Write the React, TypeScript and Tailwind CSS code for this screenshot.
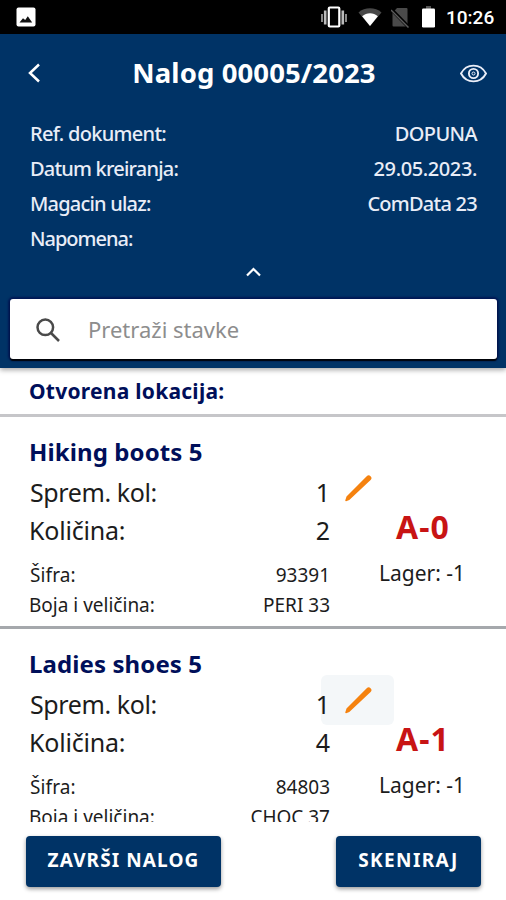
type OrderItem = {
  name: string;
  prepared: number;
  quantity: number;
  code: string;
  variant: string;
  location: string;
  stock: number;
  active?: boolean;
};

const details = [
  { label: 'Ref. dokument:', value: 'DOPUNA', labelClass: 'tracking-[-0.7px]', valueClass: 'tracking-[-0.6px]' },
  { label: 'Datum kreiranja:', value: '29.05.2023.', labelClass: 'tracking-[-0.8px]', valueClass: 'tracking-[-0.4px]' },
  { label: 'Magacin ulaz:', value: 'ComData 23', labelClass: 'tracking-[-0.8px]', valueClass: 'tracking-[-0.75px]' },
  { label: 'Napomena:', value: '', labelClass: 'tracking-[-1px]', valueClass: '' },
];

const items: OrderItem[] = [
  {
    name: 'Hiking boots 5',
    prepared: 1,
    quantity: 2,
    code: '93391',
    variant: 'PERI 33',
    location: 'A-0',
    stock: -1,
  },
  {
    name: 'Ladies shoes 5',
    prepared: 1,
    quantity: 4,
    code: '84803',
    variant: 'CHOC 37',
    location: 'A-1',
    stock: -1,
    active: true,
  },
];

const StatusBar = () => (
  <div className="flex h-[34px] shrink-0 items-center bg-black pr-[11px] pl-[16px]">
    <svg className="h-[20px] w-[20px]" viewBox="0 0 20 20">
      <rect x="0.5" y="0.5" width="19" height="19" rx="2" fill="#fff" />
      <path d="M3.5 15.5 7 11.3l2.2 1.6 2.6-3.7 4.4 6.3z" fill="#111" />
    </svg>
    <svg className="ml-auto h-[22px] w-[26px]" viewBox="0 0 26 22">
      <path d="M1 8v8M25 8v8" stroke="#888" strokeWidth="2" />
      <path d="M4.2 4.5v14M21.8 4.5v14" stroke="#bbb" strokeWidth="2.6" />
      <rect x="7.8" y="1.5" width="10.5" height="19" rx="1" fill="#000" stroke="#fff" strokeWidth="2.2" />
    </svg>
    <svg className="ml-[11px] h-[20px] w-[24px]" viewBox="0 0 25 20">
      <path d="M0.5 5.2C7 -.4 18 -.4 24.5 5.2L12.5 19.5z" fill="#484848" />
      <path d="M4.3 9.2C9 5 16 5 20.7 9.2L12.5 19.5z" fill="#fff" />
    </svg>
    <svg className="ml-[9px] h-[21px] w-[18px]" viewBox="0 0 18 21">
      <path d="M6 1h9.5q1 0 1 1v17.5H2.5q-1 0-1-1V6z" fill="#4a4a4a" />
      <path d="M-.5 1.5 18 20.5" stroke="#000" strokeWidth="3.5" />
      <path d="M0 3 17.5 20.5" stroke="#5c5c5c" strokeWidth="1.5" />
    </svg>
    <svg className="ml-[13px] h-[22px] w-[13px]" viewBox="0 0 13 22">
      <rect x="4" y="0" width="5" height="3" fill="#555" />
      <rect x="0" y="2.5" width="13" height="19" rx="1.2" fill="#fff" />
    </svg>
    <span className="ml-[11px] w-[49px] pt-[2px] font-['Roboto'] text-[19px] font-medium whitespace-nowrap text-white">
      10:26
    </span>
  </div>
);

const Header = () => (
  <header className="relative z-10 h-[334px] shrink-0 bg-[#003366] text-white shadow-[0_2px_5px_rgba(0,0,0,0.35)]">
    <div className="flex h-[82px] items-center justify-between pr-[19px] pl-[28px]">
      <button aria-label="Nazad" className="-mt-[4px]">
        <svg className="h-[20px] w-[13px]" viewBox="0 0 13 20" fill="none" stroke="#fff" strokeWidth="2.5">
          <path d="M11 1.5 2 10l9 8.5" />
        </svg>
      </button>
      <h1 className="-mt-[4px] ml-[7px] text-[27.5px] font-bold tracking-[0.1px] whitespace-nowrap">
        Nalog 00005/2023
      </h1>
      <button aria-label="Prikaz" className="-mt-[4px]">
        <svg className="h-[19px] w-[27px]" viewBox="0 0 27 19" fill="none" stroke="#eaeef8" strokeWidth="1.9">
          <path d="M1 9.5C6.5-1 20.5-1 26 9.5 20.5 20 6.5 20 1 9.5z" />
          <circle cx="13.5" cy="9.5" r="4.6" />
          <circle cx="13.5" cy="9.5" r="1.5" strokeWidth="1" />
        </svg>
      </button>
    </div>
    <dl className="pr-[29px] pl-[30px] text-[20px] font-medium text-[#e9edf7]">
      {details.map((row) => (
        <div key={row.label} className="flex h-[35px] items-center justify-between leading-[35px]">
          <dt className={row.labelClass}>{row.label}</dt>
          <dd className={row.valueClass}>{row.value}</dd>
        </div>
      ))}
    </dl>
    <div className="flex h-[43px] justify-center pt-[11px]">
      <svg className="h-[10px] w-[15px]" viewBox="0 0 15 10" fill="none" stroke="#fff" strokeWidth="2.2">
        <path d="M1 8.5 7.5 2 14 8.5" />
      </svg>
    </div>
    <div className="mr-[9px] ml-[10px] flex h-[60px] items-center rounded-[3px] bg-white pl-[26px] shadow-[0_2px_1px_rgba(0,0,0,0.9),0_0_2px_2px_rgba(0,0,70,0.55)]">
      <svg className="mt-[2px] h-[25px] w-[25px]" viewBox="0 0 25 25" fill="none" stroke="#4a4a4a" strokeWidth="2.5">
        <circle cx="9.3" cy="9.3" r="7.8" />
        <path d="m15 15 8 8" />
      </svg>
      <span className="ml-[27px] text-[22px] text-[#8d8d8d]">Pretraži stavke</span>
    </div>
  </header>
);

const ItemCard = ({ item }: { item: OrderItem }) => (
  <article className="flex h-[212px] border-b-3 border-[#a5a8ac] pl-[29px]">
    <div className="w-[301px] pt-[16px] text-[#1c1c1c]">
      <h2 className="text-[24px] leading-[38px] font-bold tracking-[0.1px] text-[#000f5a]">{item.name}</h2>
      <div className="mt-[2px] flex justify-between text-[25px] leading-[38px]">
        <span className="pl-px tracking-[-0.4px]">Sprem. kol:</span>
        <span className="relative z-10">{item.prepared}</span>
      </div>
      <div className="flex justify-between text-[25px] leading-[38px]">
        <span className="tracking-[-0.2px]">Količina:</span>
        <span>{item.quantity}</span>
      </div>
      <div className="mt-[11px] flex justify-between text-[19px] leading-[30px]">
        <span className="pl-px tracking-[0.1px]">Šifra:</span>
        <span>{item.code}</span>
      </div>
      <div className="flex justify-between text-[19px] leading-[30px]">
        <span>Boja i veličina:</span>
        <span>{item.variant}</span>
      </div>
    </div>
    <div className="-ml-[9px] pt-[46px]">
      <button
        aria-label="Izmeni"
        className={`flex h-[50px] w-[73px] items-center justify-center rounded-md ${item.active ? 'bg-[#f4f7f9]' : ''}`}
      >
        <svg className="h-[28px] w-[28px]" viewBox="0 0 28 28" fill="#f5820f">
          <path d="M1.3 26.2 2.5 22.5 22.7 2.2a2.7 2.7 0 0 1 3.9 3.8L5.3 26.1l-3.2 1.1a.8.8 0 0 1-.8-1z" />
        </svg>
      </button>
      <div className="-mt-[2px] pl-[75px] text-[32px] leading-[32px] font-bold tracking-[1px] text-[#c81414]">
        {item.location}
      </div>
      <div className="mt-[14px] pl-[58px] text-[21px] leading-[32px] whitespace-nowrap text-[#1c1c1c]">
        Lager: {item.stock}
      </div>
    </div>
  </article>
);

const App = () => {
  return (
    <div className="flex h-[900px] w-[506px] flex-col overflow-hidden bg-white font-['Noto_Sans',sans-serif]">
      <StatusBar />
      <Header />
      <div className="h-[49px] shrink-0 border-b-3 border-[#c6c6c9] pl-[29px] text-[21px] leading-[46px] font-bold tracking-[0.25px] text-[#000f5a]">
        Otvorena lokacija:
      </div>
      <main className="h-[405px] shrink-0 overflow-hidden">
        {items.map((item) => (
          <ItemCard key={item.name} item={item} />
        ))}
      </main>
      <footer className="flex justify-between pt-[14px] pr-[25px] pl-[26px]">
        <button className="h-[51px] w-[195px] rounded-[4px] bg-[#003366] pb-[2px] text-[19px] font-bold tracking-[1.1px] text-white shadow-[0_2px_4px_rgba(0,0,0,0.4)]">
          ZAVRŠI NALOG
        </button>
        <button className="h-[51px] w-[145px] rounded-[4px] bg-[#003366] pb-[2px] text-[19px] font-bold tracking-[1.4px] text-white shadow-[0_2px_4px_rgba(0,0,0,0.4)]">
          SKENIRAJ
        </button>
      </footer>
    </div>
  );
};

export default App;
